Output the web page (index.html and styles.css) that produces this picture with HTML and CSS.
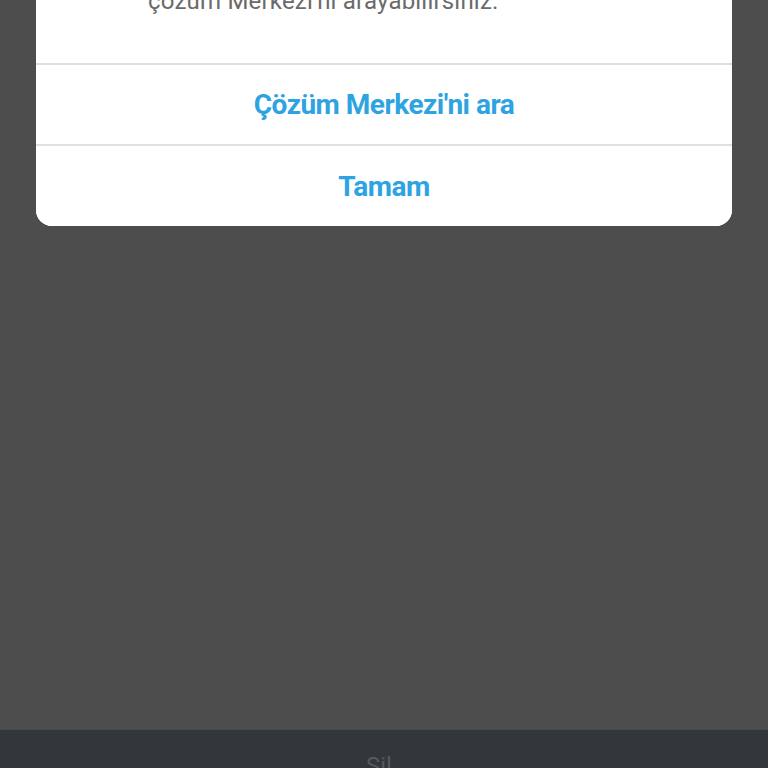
FILE: index.html
```html
<!DOCTYPE html>
<html lang="tr">
<head>
  <meta charset="UTF-8" />
  <meta name="viewport" content="width=device-width, initial-scale=1" />
  <title>Çözüm Merkezi</title>
  <link rel="stylesheet" href="styles.css">
</head>
<body>

  <div class="overlay">
    <div class="dialog">
      <div class="message">
        <p class="line">Bu işlemi şu anda gerçekleştiremiyoruz.</p>
        <p class="line">Detaylı bilgi için</p>
        <p class="line">çözüm Merkezi'ni arayabilirsiniz.</p>
      </div>
      <button class="action">Çözüm Merkezi'ni ara</button>
      <button class="action">Tamam</button>
    </div>
  </div>

  <div class="tabbar">
    <span class="tab">Sil</span>
  </div>

</body>
</html>
```

FILE: styles.css
```css
* {
  box-sizing: border-box;
  margin: 0;
  padding: 0;
}

body, html {
  height: 100%;
  font-family: Roboto, 'Noto Sans', sans-serif;
}

body {
  display: flex;
  flex-direction: column;
  height: 100vh;
  overflow: hidden;
  background: #4d4d4d;
}

/* dimmed screen behind the dialog */
.overlay {
  flex: 1;
  background: #4d4d4d;
}

.dialog {
  margin: -74px 36px 0;
  background: #fff;
  border-radius: 0 0 16px 16px;
  overflow: hidden;
}

.message {
  padding: 0 30px 47px 112px;
  color: #6a6a6a;
  font-size: 24px;
  line-height: 30px;
  letter-spacing: 0.2px;
}

.action {
  display: block;
  width: 100%;
  height: 81px;
  border: none;
  border-top: 2px solid #e0e0e0;
  background: #fff;
  color: #2ea3e2;
  font-family: Roboto, 'Noto Sans', sans-serif;
  font-size: 28px;
  font-weight: bold;
  letter-spacing: -0.5px;
}

.action:last-child {
  height: 82px;
}

/* tab bar under the overlay */
.tabbar {
  height: 39px;
  background: #33373a;
  border-top: 1px solid #45494b;
  display: flex;
  justify-content: center;
}

.tab {
  margin-top: 22px;
  margin-right: 10px;
  color: #55595c;
  font-size: 24px;
}
```
